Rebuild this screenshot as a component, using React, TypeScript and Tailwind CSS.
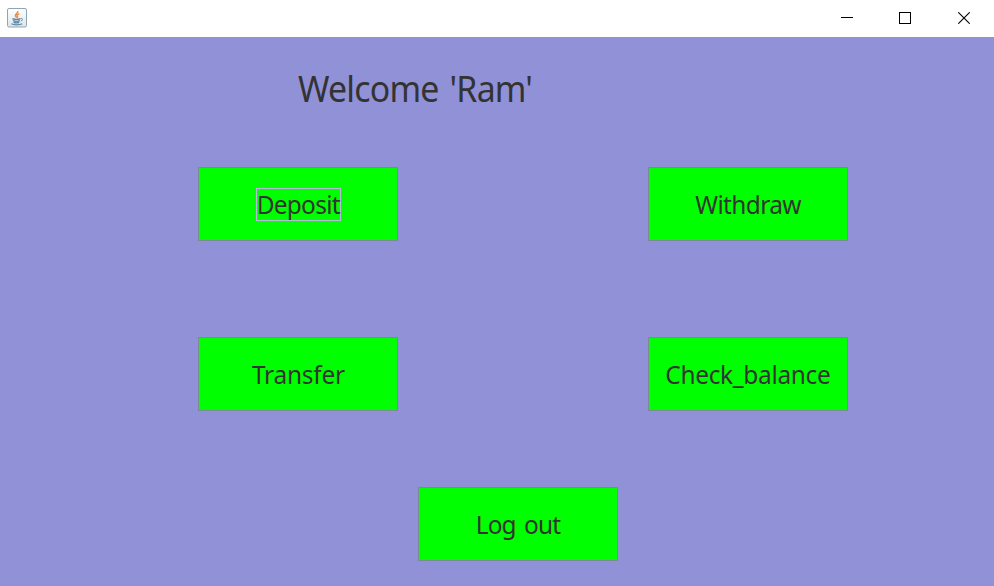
import type { ReactNode } from "react";

function JavaIcon() {
  return (
    <svg width="20" height="20" viewBox="0 0 20 20" fill="none">
      <defs>
        <linearGradient id="tile" x1="0" y1="0" x2="0" y2="1">
          <stop offset="0" stopColor="#ffffff" />
          <stop offset="1" stopColor="#dce5ea" />
        </linearGradient>
      </defs>
      <rect x="0.5" y="0.5" width="19" height="18.5" rx="1.5" fill="url(#tile)" stroke="#8fa5b5" />
      <path d="M10.8 3c.8 2.2-3.2 3-2.4 5 .2.7 1 1.1 1.3 1.7M12.4 5.6c-1.8.7-2.8 1.5-2 2.5.5.6.4 1-.2 1.5" stroke="#f0883a" strokeWidth="1.4" />
      <path d="M5.4 10.6c1.8.8 6 .8 8 0M6 12.6c2 .8 5 .8 7 0M6.6 14.3c1.8.6 4 .6 5.6 0M4.4 15.8c2 1.3 8.6 1.3 10.8 0" stroke="#5e86a5" strokeWidth="1.3" />
      <path d="M13.6 10.6c2.4-.7 2.6 1.6.3 2.5" stroke="#5e86a5" />
    </svg>
  );
}

function TitleBar() {
  return (
    <header className="flex h-[37px] items-start justify-between bg-white">
      <div className="pt-2 pl-[7px]">
        <JavaIcon />
      </div>
      <div className="flex pt-3 pr-6 text-black">
        <svg className="mr-[46px]" width="12" height="12" shapeRendering="crispEdges">
          <rect y="5" width="12" height="1" />
        </svg>
        <svg className="mr-[47px]" width="12" height="12" shapeRendering="crispEdges">
          <rect x="0.5" y="0.5" width="11" height="11" fill="none" stroke="#000" />
        </svg>
        <svg width="12" height="12">
          <path d="M0.3 0.3l11.4 11.4M11.7 0.3L0.3 11.7" stroke="#000" strokeWidth="1.1" />
        </svg>
      </div>
    </header>
  );
}

function ActionButton({ children }: { children: ReactNode }) {
  return (
    <button className="flex h-[74px] w-[200px] items-center justify-center border border-[#7a8a99] bg-[#00ff00] text-[26px] leading-[31px] whitespace-nowrap">
      {children}
    </button>
  );
}

export default function App() {
  return (
    <div className="flex h-[586px] w-[994px] flex-col overflow-hidden bg-[#9191d8] font-['Noto_Sans',sans-serif] text-[#333333]">
      <TitleBar />
      <main className="flex flex-col">
        <h1 className="mt-[30px] ml-[298px] origin-left scale-x-94 text-[36px] leading-[44px] tracking-[-0.82px] [word-spacing:3px]">
          Welcome 'Ram'
        </h1>
        <div className="mt-14 grid grid-cols-[200px_200px] gap-x-[250px] gap-y-24 pl-[198px]">
          <ActionButton>
            <span className="flex h-[33px] w-[85px] items-center justify-center border border-[#b8b8dc]">
              <span className="scale-x-94 tracking-[-0.78px]">Deposit</span>
            </span>
          </ActionButton>
          <ActionButton>
            <span className="scale-x-94 tracking-[-0.68px]">Withdraw</span>
          </ActionButton>
          <ActionButton>
            <span className="scale-x-94 tracking-[-0.25px]">Transfer</span>
          </ActionButton>
          <ActionButton>
            <span className="scale-x-94 tracking-[-0.34px]">Check_balance</span>
          </ActionButton>
        </div>
        <div className="mt-[76px] pl-[418px]">
          <ActionButton>
            <span className="scale-x-94 tracking-[-0.9px] [word-spacing:3px]">Log out</span>
          </ActionButton>
        </div>
      </main>
    </div>
  );
}
